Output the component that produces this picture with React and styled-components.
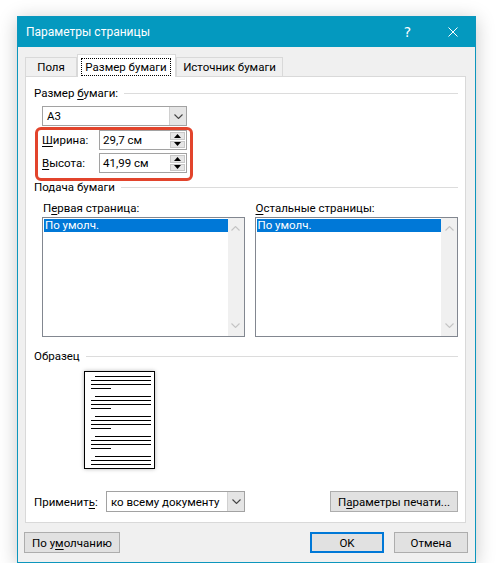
import React from "react"
import styled, { createGlobalStyle } from "styled-components"

const GlobalStyle = createGlobalStyle`
  body {
    margin: 0;
    background: #fff;
    font-family: Roboto, "Noto Sans", sans-serif;
    font-size: 11.5px;
    line-height: 16px;
    color: #000;
  }
`

const Chevron = ({ dir = "down", color = "#444" }) => (
  <svg width="9" height="5" viewBox="0 0 9 5">
    <polyline
      points={dir === "down" ? "0.5,0.5 4.5,4.5 8.5,0.5" : "0.5,4.5 4.5,0.5 8.5,4.5"}
      fill="none"
      stroke={color}
      strokeWidth="1.1"
    />
  </svg>
)

const Triangle = ({ up }) => (
  <svg width="7" height="4" viewBox="0 0 7 4">
    <polygon points={up ? "0,4 3.5,0 7,4" : "0,0 3.5,4 7,0"} fill="#000" />
  </svg>
)

const CloseIcon = () => (
  <svg width="10" height="10" viewBox="0 0 10 10">
    <path d="M0.5 0.5 L9.5 9.5 M9.5 0.5 L0.5 9.5" stroke="#fff" strokeWidth="1" />
  </svg>
)

const pageGroups = [
  ["indent", "full", "full", "short"],
  ["indent", "full", "full", "short"],
  ["indent", "full", "full", "short"],
  ["indent", "full", "full", "short"],
  ["indent", "full", "full"],
]

export default function App() {
  return (
    <Page>
      <GlobalStyle />
      <Dialog>
        <TitleBar>
          <Title>Параметры страницы</Title>
          <TitleBtn>?</TitleBtn>
          <TitleBtn><CloseIcon /></TitleBtn>
        </TitleBar>

        <Body>
          <TabStrip>
            <Tab $w={52}>Поля</Tab>
            <Tab $w={99} $active>
              <FocusRect>Размер бумаги</FocusRect>
            </Tab>
            <Tab $w={107}>Источник бумаги</Tab>
          </TabStrip>

          <Panel>
            <GroupHeader>
              <span>Размер <Acc>б</Acc>умаги:</span>
              <Rule />
            </GroupHeader>

            <Combo $w={145} $top={5} $left={8}>
              <ComboText>A3</ComboText>
              <ComboBtn><Chevron /></ComboBtn>
            </Combo>

            <Fields>
              <FieldRow>
                <FieldLabel><Acc>Ш</Acc>ирина:</FieldLabel>
                <SpinBox>
                  <SpinText>29,7 см</SpinText>
                  <SpinCol>
                    <SpinBtn><Triangle up /></SpinBtn>
                    <SpinBtn><Triangle /></SpinBtn>
                  </SpinCol>
                </SpinBox>
              </FieldRow>
              <FieldRow>
                <FieldLabel><Acc>В</Acc>ысота:</FieldLabel>
                <SpinBox>
                  <SpinText>41,99 см</SpinText>
                  <SpinCol>
                    <SpinBtn><Triangle up /></SpinBtn>
                    <SpinBtn><Triangle /></SpinBtn>
                  </SpinCol>
                </SpinBox>
              </FieldRow>
              <Highlight />
            </Fields>

            <GroupHeader $top={6}>
              <span>Подача бумаги</span>
              <Rule />
            </GroupHeader>

            <ListsRow>
              <ListCol $w={203}>
                <ListLabel>П<Acc>е</Acc>рвая страница:</ListLabel>
                <ListBox>
                  <ListItems>
                    <ListItem $selected>По умолч.</ListItem>
                  </ListItems>
                  <ScrollBar>
                    <Chevron dir="up" color="#c4c4c4" />
                    <Chevron color="#c4c4c4" />
                  </ScrollBar>
                </ListBox>
              </ListCol>
              <ListCol $w={204}>
                <ListLabel><Acc>О</Acc>стальные страницы:</ListLabel>
                <ListBox>
                  <ListItems>
                    <ListItem $selected>По умолч.</ListItem>
                  </ListItems>
                  <ScrollBar>
                    <Chevron dir="up" color="#c4c4c4" />
                    <Chevron color="#c4c4c4" />
                  </ScrollBar>
                </ListBox>
              </ListCol>
            </ListsRow>

            <GroupHeader $top={11}>
              <span>Образец</span>
              <Rule />
            </GroupHeader>

            <Preview>
              {pageGroups.map((group, i) => (
                <LineGroup key={i}>
                  {group.map((kind, j) => (
                    <PageLine key={j} $kind={kind} />
                  ))}
                </LineGroup>
              ))}
            </Preview>

            <ApplyRow>
              <ApplyLabel>Применит<Acc>ь</Acc>:</ApplyLabel>
              <Combo $w={139} $h={21}>
                <ComboText>ко всему документу</ComboText>
                <ComboBtn><Chevron /></ComboBtn>
              </Combo>
              <Button $w={128} $push>П<Acc>а</Acc>раметры печати...</Button>
            </ApplyRow>
          </Panel>

          <ButtonRow>
            <Button $w={96}>По у<Acc>м</Acc>олчанию</Button>
            <Spacer />
            <Button $w={74} $primary>OK</Button>
            <Button $w={74}>Отмена</Button>
          </ButtonRow>
        </Body>
      </Dialog>
    </Page>
  )
}

const Page = styled.div`
  padding: 16px 0 0 17px;
`

const Dialog = styled.div`
  width: 459px;
  box-sizing: border-box;
  border: 1px solid #0c96bd;
  background: #f0f0f0;
  box-shadow: 0 3px 18px rgba(0, 0, 0, 0.22);
`

const TitleBar = styled.div`
  height: 30px;
  display: flex;
  align-items: center;
  padding-left: 8px;
  background: #0499bf;
  color: #fff;
`

const Title = styled.div`
  flex: 1;
  font-size: 12px;
`

const TitleBtn = styled.div`
  width: 45px;
  height: 30px;
  display: flex;
  align-items: center;
  justify-content: center;
  font-size: 14px;
  font-family: "DejaVu Sans", sans-serif;
`

const Body = styled.div`
  padding: 7px 9px 9px 7px;
`

const TabStrip = styled.div`
  display: flex;
  align-items: flex-end;
  height: 22px;
  position: relative;
  z-index: 1;
`

const Tab = styled.div`
  width: ${p => p.$w}px;
  height: ${p => (p.$active ? 23 : 19)}px;
  margin-bottom: ${p => (p.$active ? -1 : 0)}px;
  box-sizing: border-box;
  border: 1px solid #d9d9d9;
  border-bottom: none;
  background: ${p => (p.$active ? "#fff" : "#f0f0f0")};
  display: flex;
  align-items: ${p => (p.$active ? "flex-start" : "center")};
  justify-content: center;
  padding: ${p => (p.$active ? "3px 4px 0 3px" : "0")};
`

const FocusRect = styled.div`
  flex: 1;
  height: 16px;
  border: 1px dotted #000;
  display: flex;
  align-items: center;
  justify-content: center;
`

const Panel = styled.div`
  height: 447px;
  box-sizing: border-box;
  background: #fff;
  border: 1px solid #d9d9d9;
  padding: 8px 7px 0 8px;
`

const GroupHeader = styled.div`
  display: flex;
  align-items: center;
  gap: 6px;
  height: 16px;
  margin-top: ${p => p.$top || 0}px;
  white-space: nowrap;
`

const Rule = styled.div`
  flex: 1;
  height: 1px;
  background: #dcdcdc;
`

const Acc = styled.span`
  text-decoration: underline;
  text-underline-offset: 2px;
`

const Combo = styled.div`
  display: flex;
  width: ${p => p.$w}px;
  height: ${p => p.$h || 20}px;
  box-sizing: border-box;
  margin: ${p => p.$top || 0}px 0 0 ${p => p.$left || 0}px;
  border: 1px solid #a2a2a2;
  background: #fff;
`

const ComboText = styled.div`
  flex: 1;
  padding-left: 4px;
  display: flex;
  align-items: center;
  white-space: nowrap;
  overflow: hidden;
`

const ComboBtn = styled.div`
  width: 16px;
  background: #e5e5e5;
  border-left: 1px solid #d0d0d0;
  display: flex;
  align-items: center;
  justify-content: center;
`

const Fields = styled.div`
  position: relative;
  margin: 4px 0 0 8px;
  display: flex;
  flex-direction: column;
  gap: 3px;
`

const FieldRow = styled.div`
  display: flex;
  align-items: center;
  height: 20px;
`

const FieldLabel = styled.div`
  width: 57px;
`

const SpinBox = styled.div`
  display: flex;
  width: 88px;
  height: 20px;
  box-sizing: border-box;
  border: 1px solid #a2a2a2;
  background: #fff;
`

const SpinText = styled.div`
  flex: 1;
  padding-left: 3px;
  display: flex;
  align-items: center;
`

const SpinCol = styled.div`
  width: 15px;
  padding: 1px;
  display: flex;
  flex-direction: column;
  gap: 1px;
`

const SpinBtn = styled.div`
  flex: 1;
  background: #e6e6e6;
  border: 1px solid #c8c8c8;
  display: flex;
  align-items: center;
  justify-content: center;
`

const Highlight = styled.div`
  position: absolute;
  left: -7px;
  top: -3px;
  width: 158px;
  height: 54px;
  box-sizing: border-box;
  border: 3px solid #e2442c;
  border-radius: 6px;
  pointer-events: none;
`

const ListsRow = styled.div`
  display: flex;
  gap: 10px;
  margin: 5px 0 0 8px;
`

const ListCol = styled.div`
  width: ${p => p.$w}px;
  display: flex;
  flex-direction: column;
  gap: 1px;
`

const ListLabel = styled.div`
  padding-left: 1px;
  height: 16px;
  white-space: nowrap;
`

const ListBox = styled.div`
  height: 120px;
  box-sizing: border-box;
  border: 1px solid #828790;
  display: flex;
  background: #fff;
`

const ListItems = styled.div`
  flex: 1;
  padding: 1px 0 1px 1px;
`

const ListItem = styled.div`
  height: 13px;
  line-height: 13px;
  padding-left: 1px;
  background: ${p => (p.$selected ? "#0078d7" : "transparent")};
  color: ${p => (p.$selected ? "#fff" : "#000")};
`

const ScrollBar = styled.div`
  width: 16px;
  background: #f0f0f0;
  display: flex;
  flex-direction: column;
  align-items: center;
  justify-content: space-between;
  padding: 8px 0;
`

const Preview = styled.div`
  width: 71px;
  height: 98px;
  box-sizing: border-box;
  margin: 7px 0 0 50px;
  border: 1.5px solid #000;
  padding: 3.5px 3px 0 6px;
  background: #fff;
  box-shadow: 0 0 4px rgba(0, 0, 0, 0.3);
  display: flex;
  flex-direction: column;
  gap: 6.5px;
`

const LineGroup = styled.div`
  display: flex;
  flex-direction: column;
  gap: 2.5px;
`

const PageLine = styled.div`
  height: 1.5px;
  background: #000;
  margin-left: ${p => (p.$kind === "indent" ? 4 : 0)}px;
  width: ${p => (p.$kind === "short" ? "20px" : "auto")};
`

const ApplyRow = styled.div`
  display: flex;
  align-items: center;
  margin-top: 22px;
`

const ApplyLabel = styled.div`
  width: 72px;
`

const Button = styled.div`
  width: ${p => p.$w}px;
  height: 21px;
  box-sizing: border-box;
  margin-left: ${p => (p.$push ? "auto" : "0")};
  border: ${p => (p.$primary ? "2px solid #0078d7" : "1px solid #adadad")};
  background: #e1e1e1;
  display: flex;
  align-items: center;
  justify-content: center;
  white-space: nowrap;
`

const ButtonRow = styled.div`
  display: flex;
  gap: 10px;
  margin: 9px -2px 0 -1px;
`

const Spacer = styled.div`
  flex: 1;
`
